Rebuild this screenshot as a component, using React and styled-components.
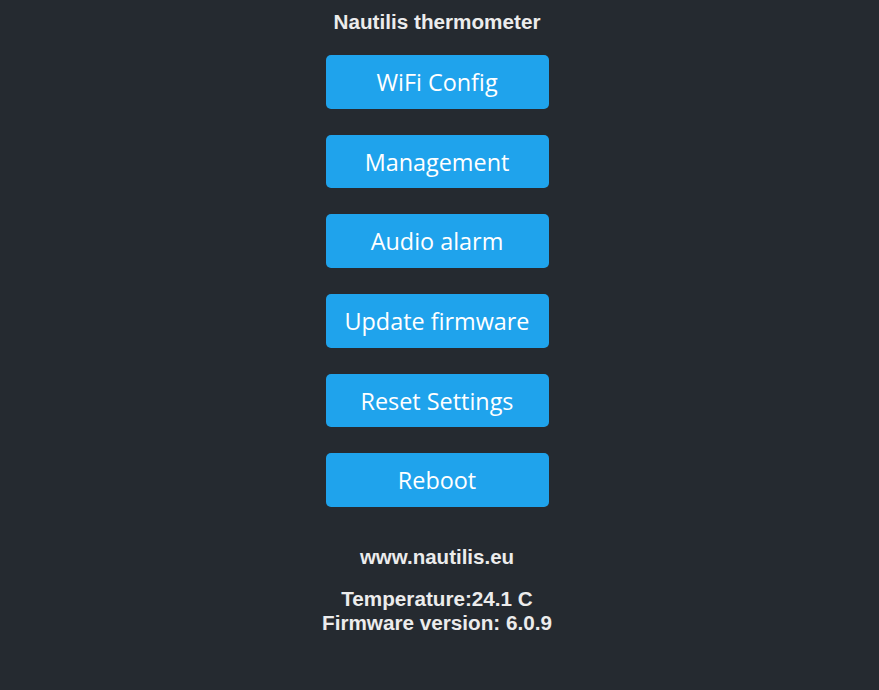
import React from "react";
import styled, { createGlobalStyle } from "styled-components";

const GlobalStyle = createGlobalStyle`
  html, body {
    margin: 0;
    background: #252a30;
  }
  body {
    font-family: "Liberation Sans", Arial, sans-serif;
    color: #ececec;
  }
`;

const Page = styled.div`
  display: flex;
  flex-direction: column;
  align-items: center;
  padding: 10px 5px 0 0;
  min-height: 690px;
  box-sizing: border-box;
`;

const Title = styled.h1`
  margin: 0 0 21px;
  font-size: 20.7px;
  font-weight: bold;
  line-height: 24px;
`;

const Menu = styled.div`
  display: flex;
  flex-direction: column;
  gap: 26px;
  width: 223px;
`;

const Button = styled.button`
  height: 53.7px;
  padding: 0;
  border: 0;
  border-radius: 5px;
  background: #1fa3ec;
  color: #fff;
  font-family: "Open Sans", sans-serif;
  font-size: 23.4px;
  cursor: pointer;
`;

const Link = styled.div`
  margin-top: 38px;
  font-size: 20.5px;
  font-weight: bold;
  line-height: 24px;
`;

const Info = styled.div`
  margin-top: 18px;
  font-size: 20.7px;
  font-weight: bold;
  line-height: 24px;
  text-align: center;
`;

const items = [
  "WiFi Config",
  "Management",
  "Audio alarm",
  "Update firmware",
  "Reset Settings",
  "Reboot",
];

export default function App() {
  return (
    <Page>
      <GlobalStyle />
      <Title>Nautilis thermometer</Title>
      <Menu>
        {items.map(label => (
          <Button key={label}>{label}</Button>
        ))}
      </Menu>
      <Link>www.nautilis.eu</Link>
      <Info>
        Temperature:24.1 C
        <br />
        Firmware version: 6.0.9
      </Info>
    </Page>
  );
}
